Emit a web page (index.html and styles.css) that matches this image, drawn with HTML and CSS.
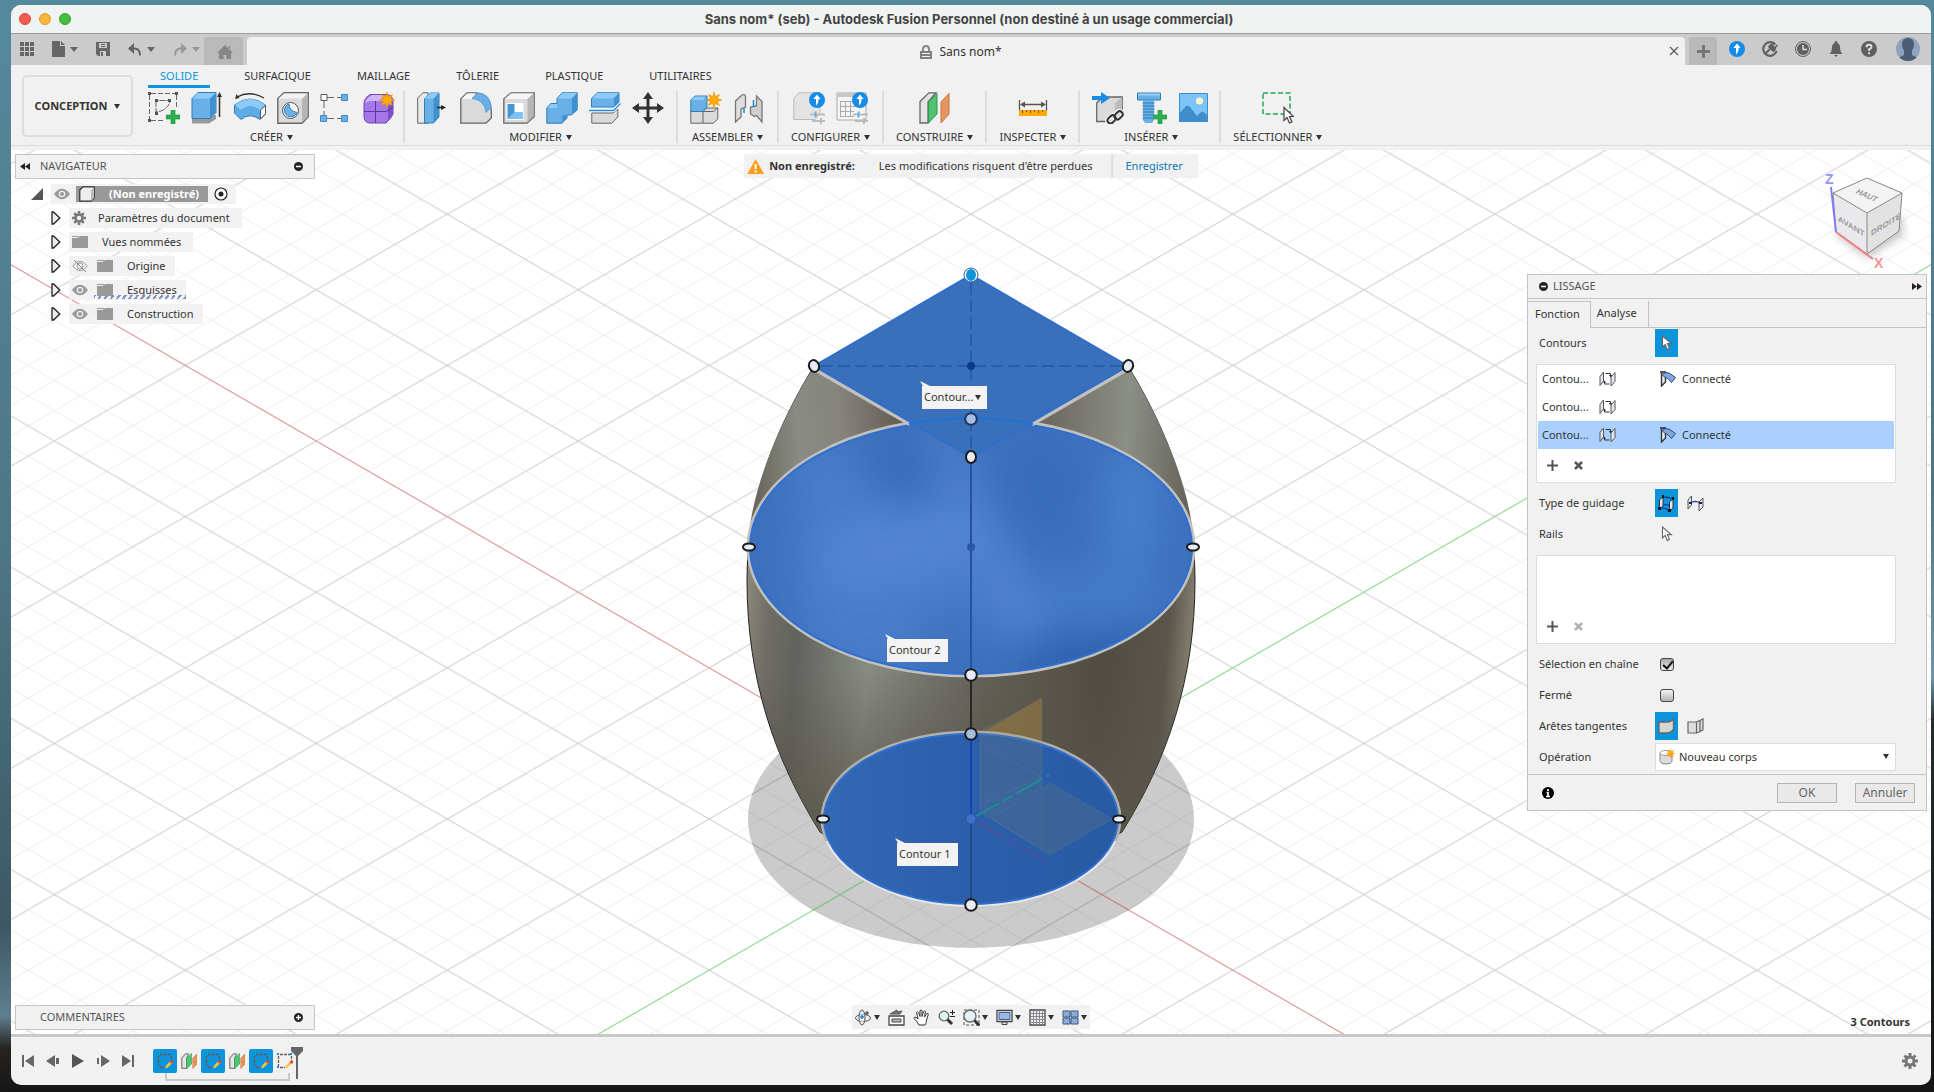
FILE: index.html
```
<!DOCTYPE html>
<html lang="fr">
<head>
<meta charset="utf-8">
<title>Sans nom* (seb) - Autodesk Fusion Personnel</title>
<link rel="stylesheet" href="styles.css">
</head>
<body>
<svg class="sprite" aria-hidden="true">
  <symbol id="eye" viewBox="0 0 16 12"><path d="M0 6Q8-4.500 16 6Q8 16.500 0 6Z" fill="#999"/><circle cx="8" cy="6" r="3.300" fill="#f1f1f1"/><circle cx="8" cy="6" r="2" fill="#999"/></symbol>
  <symbol id="eye-off" viewBox="0 0 16 12"><path d="M.7 6Q8-3.500 15.300 6Q8 15.500.7 6Z" fill="none" stroke="#999"/><circle cx="8" cy="6" r="3" fill="none" stroke="#999"/><path d="M2 0L14 12" stroke="#888"/></symbol>
  <symbol id="folder" viewBox="0 0 16 14"><path d="M0 1h7v1H0zM0 3h6l2-2h8v12H0z" fill="#999"/></symbol>
  <symbol id="gear" viewBox="0 0 16 16"><g fill="none" stroke="#777"><circle cx="8" cy="8" r="4" stroke-width="3"/><path d="M8 0v3M8 13v3M0 8h3M13 8h3M2.500 2.500l2 2M11.500 11.500l2 2M13.500 2.500l-2 2M4.500 11.500l-2 2" stroke-width="3"/></g></symbol>
  <symbol id="expand" viewBox="0 0 10 14"><path d="M1 1h1.500L8.800 7L2.500 13H1z" fill="#eee" stroke="#222" stroke-width="1.300"/></symbol>
  <symbol id="plus-green" viewBox="0 0 14 14"><path d="M5 0h4v5h5v4H9v5H5V9H0V5h5z" fill="#2bb04f" stroke="#189038" stroke-width=".6"/></symbol>
  <symbol id="star" viewBox="0 0 16 16"><path d="M8 0l1.400 4.500L13.500 2.500L11.500 6.600L16 8l-4.500 1.400l2 4.100l-4.100-2L8 16l-1.400-4.500l-4.100 2l2-4.100L0 8l4.500-1.400l-2-4.100l4.100 2z" fill="#ffa90a" stroke="#e08a00" stroke-width=".5"/></symbol>
  <symbol id="up-badge" viewBox="0 0 16 16"><circle cx="8" cy="8" r="8" fill="#178be6"/><path d="M8 2.500l3.600 4.600H9.600q0 4.500-2.600 6.400V7.100H4.400z" fill="#fff"/></symbol>
  <symbol id="swap" viewBox="0 0 17 16"><path d="M1 5.500L4.500 1v9L1 14.500zM12 6l4-4.500v9L12 15z" fill="#e3e7ee" stroke="#555"/><path d="M6.500 2.500h5v2M10.500 13H5.500v-2" fill="none" stroke="#333"/><path d="M9.800 4h3.400l-1.700 2.200zM3.800 11.500h3.400L5.500 9.500z" fill="#333"/></symbol>
  <symbol id="connect" viewBox="0 0 16 16"><path d="M1.500 2v13l4-4V6" fill="#eee" stroke="#333" stroke-width="1.400"/><path d="M0 1h6" stroke="#222" stroke-width="1.500"/><path d="M2 3.500Q5 .5 9 2L15.500 6.500l-4 5Q8 6.500 4.500 6z" fill="#7fa9d8" stroke="#234a78"/></symbol>
  <symbol id="pointer" viewBox="0 0 12 16"><path d="M1.500 1v11l2.700-2.600l2 5l2.200-1l-2-4.800h3.900z" fill="#fff" stroke="#666" stroke-width="1.100"/></symbol>
  <symbol id="sketch-edit" viewBox="0 0 16 16"><path d="M3 1.500h10M1.500 3v10M14.500 3v5M3 14.500h5" stroke="#6b5a52" stroke-width="1.300" fill="none" stroke-dasharray="3 1"/><path d="M13.500 8l2 2l-5 4.800l-2.300.5l.5-2.300z" fill="#ffc24a"/><circle cx="14.600" cy="9" r="1.600" fill="#e43"/></symbol>
  <symbol id="plane" viewBox="0 0 16 16"><path d="M.8 5L4.500.8h3L5.800 5v10.300h-5z" fill="#e4e4e4" stroke="#666"/><path d="M5.500 5.500L10.500.5v10.500l-5 4.800z" fill="#4fc274" stroke="#2b9a50" stroke-width=".6"/><path d="M11.800 5L16 1v10l-4.200 4.500z" fill="#e6965e" stroke="#c47440" stroke-width=".6"/></symbol>
</svg>

<div class="window">
  <header class="titlebar">
    <div class="lights"><i class="light red"></i><i class="light yellow"></i><i class="light green"></i></div>
    <h1>Sans nom* (seb) - Autodesk Fusion Personnel (non destiné à un usage commercial)</h1>
  </header>

  <div class="tabstrip">
    <div class="quick">
      <button class="bare" aria-label="Données"><svg width="14" height="14"><path d="M0 0h4v4H0zM5 0h4v4H5zM10 0h4v4h-4zM0 5h4v4H0zM5 5h4v4H5zM10 5h4v4h-4zM0 10h4v4H0zM5 10h4v4H5zM10 10h4v4h-4z" fill="#666"/></svg></button>
      <button class="bare" aria-label="Fichier"><svg width="13" height="16"><path d="M0 0h8v5h5v11H0zM9 0l4 4H9z" fill="#666"/></svg><i class="caret"></i></button>
      <button class="bare" aria-label="Enregistrer"><svg width="14" height="14"><path d="M0 0h14v14H2l-2-2z" fill="#666"/><path d="M3 1h8v5H3zM4 9h6v5H4z" fill="#cbcbcb"/><path d="M5 2.500h4M5 4.500h4" stroke="#666"/><path d="M5 10h2v4H5z" fill="#666"/></svg></button>
      <button class="bare" aria-label="Annuler"><svg width="14" height="13"><path d="M1 5.500h5.500q5.500 0 5.500 7" fill="none" stroke="#666" stroke-width="2"/><path d="M6 0v11L0 5.500z" fill="#666"/></svg><i class="caret"></i></button>
      <button class="bare faded" aria-label="Rétablir"><svg width="14" height="13"><path d="M13 5.500H7.500Q2 5.500 2 12.500" fill="none" stroke="#666" stroke-width="2"/><path d="M8 0v11l6-5.500z" fill="#666"/></svg><i class="caret"></i></button>
    </div>
    <button class="hometab" aria-label="Accueil"><svg width="16" height="14"><path d="M8 0l8 8h-2v6H9.500v-4h-3v4H2V8H0zM11.500 1H13v3l-1.500-1.500z" fill="#868686"/></svg></button>
    <div class="doctab">
      <span class="docname"><svg width="12" height="14"><path d="M3 6V4a3 3 0 0 1 6 0v2" fill="none" stroke="#888" stroke-width="2"/><path d="M0 6h12v8H0z" fill="#808080"/><path d="M2 8.500h8M2 11.500h8" stroke="#eee"/></svg>Sans nom*</span>
      <button class="bare" aria-label="Fermer l'onglet"><svg width="10" height="10"><path d="M1 1l8 8M9 1l-8 8" stroke="#666" stroke-width="1.500"/></svg></button>
    </div>
    <button class="newtab" aria-label="Nouveau"><svg width="13" height="13"><path d="M6.500 0v13M0 6.500h13" stroke="#777" stroke-width="3"/></svg></button>
    <div class="status">
      <button class="bare" aria-label="Mises à jour"><svg width="16" height="16"><use href="#up-badge"/></svg></button>
      <button class="bare" aria-label="Extensions"><svg width="16" height="16"><path d="M13.200 3.500A6.800 6.800 0 1 0 14.600 10" fill="none" stroke="#606060" stroke-width="2.200"/><path d="M3 13l5-5" stroke="#606060" stroke-width="2"/><path d="M6 6l5 5q3-1 3-4L10 3q-3 0-4 3z" fill="#606060"/><path d="M9.500 4.500l3-3M12.500 7l3-3" stroke="#606060" stroke-width="1.600"/></svg></button>
      <button class="bare" aria-label="État des tâches"><svg width="16" height="16"><circle cx="8" cy="8" r="7.500" fill="none" stroke="#606060"/><circle cx="8" cy="8" r="6" fill="#606060"/><path d="M8 4v4.500h4" stroke="#ddd" stroke-width="1.500" fill="none"/></svg></button>
      <button class="bare" aria-label="Notifications"><svg width="16" height="16"><path d="M8 0q1.500 0 1.500 2Q12 3 12 6q0 5 2.500 7h-13Q4 11 4 6q0-3 2.500-4Q6.500 0 8 0zM6 14h4l-2 2z" fill="#606060"/></svg></button>
      <button class="bare" aria-label="Aide"><svg width="16" height="16"><circle cx="8" cy="8" r="8" fill="#606060"/><path d="M5.500 6.300q0-2.500 2.500-2.500t2.500 2.200Q10.500 7.500 8 8.300V10M8 11.200v2" stroke="#ddd" stroke-width="1.900" fill="none"/></svg></button>
      <button class="bare avatar" aria-label="Profil"><svg width="24" height="24"><defs><clipPath id="av"><circle cx="12" cy="12" r="12"/></clipPath></defs><circle cx="12" cy="12" r="12" fill="#8fa3be"/><path clip-path="url(#av)" d="M12 1q6 0 6 6.500q0 4-2 6V18l6 3v4H2v-4l6-3v-4.500q-2-2-2-6Q6 1 12 1z" fill="#4d5c74"/></svg></button>
    </div>
  </div>

  <div class="ribbon">
    <button class="workspace">CONCEPTION<i class="caret dark"></i></button>
    <div class="ribbon-main">
      <nav class="ribbon-tabs">
        <a href="#" class="current">SOLIDE</a><a href="#">SURFACIQUE</a><a href="#">MAILLAGE</a><a href="#">TÔLERIE</a><a href="#">PLASTIQUE</a><a href="#">UTILITAIRES</a>
      </nav>
      <div class="groups">
        <section class="group first">
          <div class="tools">
            <button class="bare" aria-label="Créer une esquisse"><svg width="32" height="32"><path d="M3 1.500h24M1.500 3v24M3 28.500h14M28.500 3v13" fill="none" stroke="#666" stroke-dasharray="5 2"/><path d="M8 9v11l5-1q8-3 9-10.500H8" fill="none" stroke="#666" stroke-dasharray="6 1"/><path d="M0 0h3v3H0zM27 0h3v3h-3zM0 27h3v3H0zM7 7h3v3H7zM20 7h3v3h-3zM7 20h3v3H7z" fill="#555"/><use href="#plus-green" x="18" y="18" width="14" height="14"/></svg></button>
            <button class="bare" aria-label="Extrusion"><svg width="32" height="32"><path d="M1 27l0 4.500h17L25 27v-4z" fill="#999"/><path d="M1 6.500L7 .5h18v20l-6 6H1z" fill="#68b0e6" stroke="#2f7cb8"/><path d="M1.500 6.500L7 1h17.500l-6 5.500z" fill="#8ccaf8"/><path d="M19 7l5.500-6v20L19 26z" fill="#3f92cf"/><path d="M28.500 25V3" stroke="#333" stroke-width="1.500"/><path d="M28.500 0l2.500 5h-5z" fill="#333"/></svg></button>
            <button class="bare" aria-label="Révolution"><svg width="32" height="32"><path d="M3 5Q16-2 30 6" fill="none" stroke="#333" stroke-width="1.300"/><path d="M1 7l1.500-5l3 4z" fill="#333"/><path d="M.5 13Q16 1 31.500 13v9L26 27.500Q16 20 7 27.500L.5 21z" fill="#5fabe4" stroke="#2f7cb8"/><path d="M1 13Q16 1 31 13l-5 5Q16 10 7 18z" fill="#8ccaf8"/><path d="M26.500 18l5-4.500v8l-5 5.500z" fill="#fff" stroke="#555"/></svg></button>
            <button class="bare" aria-label="Perçage"><svg width="32" height="32"><path d="M.8 6.500L7 .8h24.200v24L25 31.200H.8z" fill="#dadada" stroke="#666" stroke-width="1.400"/><path d="M1.500 6.500L7 1.500h23.500l-6 5z" fill="#f3f3f3"/><path d="M25 7l5.500-5v23L25 30.500z" fill="#b5b5b5"/><circle cx="13.500" cy="18.500" r="8" fill="#f4f4f4" stroke="#555"/><path d="M12 12q0 7 8 8.500a6.500 6.500 0 1 1-8-8.500z" fill="#68b0e6" stroke="#3a7fb5"/></svg></button>
            <button class="bare" aria-label="Réseau"><svg width="32" height="32"><path d="M7 5.500h16M4 9v16M7 26.500h16" stroke="#666" stroke-dasharray="7 3"/><path d="M1 2.500h6v6H1z" fill="#fff" stroke="#555"/><path d="M21.500 2.500h6v6h-6zM21.500 23.500h6v6h-6zM.5 23.500h6v6h-6z" fill="#68b0e6" stroke="#3a8ccb"/></svg></button>
            <button class="bare" aria-label="Créer une forme"><svg width="32" height="32"><path d="M1 11Q1 8 4 5l3-2.500h17q6 1 6 7V22q-2 5-7 9H7q-6 0-6-7z" fill="#a476e8" stroke="#6f43b5"/><path d="M2 11q0-3 3-5l4-3h12l-3 6H7z" fill="#d0b4fa"/><path d="M25 14l5-3v11l-5 6z" fill="#7d4ecb"/><path d="M12.500 9v22M1 19.500h22q5-1 7-5" stroke="#5d379c" fill="none"/><use href="#star" x="16" width="16" height="16"/></svg></button>
          </div>
          <button class="bare label">CRÉER<i class="caret dark"></i></button>
        </section>
        <section class="group">
          <div class="tools">
            <button class="bare" aria-label="Appuyer/Tirer"><svg width="32" height="32"><path d="M.7 6L6 .7h5v30.500H.7z" fill="#e8e8e8" stroke="#666"/><path d="M7.500 7L13 1h9v24l-5.500 6h-9z" fill="#68b0e6" stroke="#2f7cb8"/><path d="M8 6.500L13 1h8.500l-5 5.500z" fill="#8ccaf8"/><path d="M16.500 7L22 1.500v23L16.500 30z" fill="#3f92cf"/><path d="M20 15.500h6" stroke="#222" stroke-width="1.500"/><path d="M29 15.500l-5-2.500v5z" fill="#222"/></svg></button>
            <button class="bare" aria-label="Congé"><svg width="32" height="32"><path d="M.8 7L7 .8h9Q31 4 31.300 20v6L26 31.200H.8z" fill="#dadada" stroke="#666" stroke-width="1.300"/><path d="M1.500 7L7 1.500h8L12 7z" fill="#f5f5f5"/><path d="M12 6.500L18 .7Q30 2 31.300 15L26 20.500Q25 8 12 6.500z" fill="#68b0e6" stroke="#3a8ccb" stroke-width=".7"/></svg></button>
            <button class="bare" aria-label="Coque"><svg width="32" height="32"><path d="M.8 7L8 .8h23.200v24L24 31.200H.8z" fill="#dadada" stroke="#666" stroke-width="1.300"/><path d="M1.500 7L8 1.500h22.500l-6 5.500z" fill="#f5f5f5"/><path d="M24.500 7l6-5.500V24l-6 6.500z" fill="#b5b5b5"/><path d="M3.500 11h17v17h-17z" fill="#fff"/><path d="M4.500 12h7v8h8v7h-15z" fill="#4596d3"/><path d="M11.500 20h8v7h-15z" fill="#7cc0f4"/></svg></button>
            <button class="bare" aria-label="Combiner"><svg width="32" height="32"><path d="M.8 16l4-4.500H11V6.500L16 .8h15.200V18l-6 5H21v3l-5 5.200H.8z" fill="#68b0e6" stroke="#2f7cb8"/><path d="M11.500 6.500L16 1h15l-5.500 5.500zM1.500 16l3.500-4h6v4z" fill="#8ccaf8"/><path d="M26 6.500l5-5V18l-5 4.500zM16.500 23H21v3l-4.500 4.500z" fill="#3f92cf"/></svg></button>
            <button class="bare" aria-label="Scinder le corps"><svg width="32" height="32"><path d="M2.800 21h21l5-4v8l-6 6.200h-20z" fill="#dadada" stroke="#666"/><path d="M2.500 6.500L8 .8h22V10l-5.500 5h-22z" fill="#68b0e6" stroke="#2f7cb8"/><path d="M3 6.500L8 1h21.500l-5 5.500z" fill="#8ccaf8"/><path d="M25 6.500l5-5V10l-5 5z" fill="#3f92cf"/><path d="M0 18.500h24.500l7-7" fill="none" stroke="#fff" stroke-width="3"/><path d="M0 18.500h24.500l7-7" fill="none" stroke="#178be6" stroke-width="1.300"/></svg></button>
            <button class="bare" aria-label="Déplacer"><svg width="32" height="32"><path d="M16 4v24M4 16h24" stroke="#333" stroke-width="3"/><path d="M16 0l5 7H11zM16 32l5-7H11zM0 16l7-5v10zM32 16l-7-5v10z" fill="#333"/></svg></button>
          </div>
          <button class="bare label">MODIFIER<i class="caret dark"></i></button>
        </section>
        <section class="group">
          <div class="tools">
            <button class="bare" aria-label="Nouveau composant"><svg width="32" height="32"><path d="M.8 19h12l4-3h11v11l-4.500 4.200H.8z" fill="#dadada" stroke="#666"/><path d="M13 19v12M1 19.500h22.500l4-3.500" stroke="#666" fill="none"/><path d="M.8 8L5 4h12v11l-4 4.500H.8z" fill="#68b0e6" stroke="#2f7cb8"/><path d="M1.500 8L5 4.500h11L13 8z" fill="#8ccaf8"/><use href="#star" x="16" width="16" height="16"/></svg></button>
            <button class="bare" aria-label="Liaison"><svg width="32" height="32"><path d="M2.500 9L9 3q3.500-1.500 3.500 2v10L8 17v8l-5.500 5z" fill="#dedede" stroke="#777" stroke-width="1.300"/><path d="M29 30V9.500L23.500 4v10l-6 1v7l4 2.500l2-1z" fill="#cfcfcf" stroke="#777" stroke-width="1.300"/><path d="M11 16v5M20.500 8v7" stroke="#178be6" stroke-width="1.500"/></svg></button>
          </div>
          <button class="bare label">ASSEMBLER<i class="caret dark"></i></button>
        </section>
        <section class="group">
          <div class="tools">
            <button class="bare" aria-label="Configurer"><svg width="32" height="32"><path d="M.8 6.500L6 .8h21v20L22 27.500H.8z" fill="#e4e4e4" stroke="#bbb"/><path d="M17 22.500h15M19 29h13" stroke="#bbb" stroke-width="2"/><path d="M22.500 19.500v6" stroke="#68b0e6" stroke-width="2"/><path d="M28 26v6" stroke="#bbb" stroke-width="2"/><use href="#up-badge" x="16" width="16" height="16"/></svg></button>
            <button class="bare" aria-label="Table de configurations"><svg width="32" height="32"><path d="M1 1h29v27H1z" fill="#f5f5f5" stroke="#aaa"/><path d="M1 1h29v4H1z" fill="#c8c8c8"/><path d="M4 9.500h20M4 14.500h20M4 19.500h14M4 24.500h14M4.500 9v16M9.500 9v16M14.500 9v16" stroke="#aaa"/><path d="M17 22.500h15M19 29h13M28 26v6" stroke="#bbb" stroke-width="2"/><path d="M22.500 19.500v6" stroke="#68b0e6" stroke-width="2"/><use href="#up-badge" x="16" width="16" height="16"/></svg></button>
          </div>
          <button class="bare label">CONFIGURER<i class="caret dark"></i></button>
        </section>
        <section class="group">
          <div class="tools">
            <button class="bare" aria-label="Plan de décalage"><svg width="32" height="32"><path d="M1 9.500L10 .8h7L9 10v21H1z" fill="#e4e4e4" stroke="#666" stroke-width="1.300"/><path d="M9.500 10L18 1.500v20.500l-8.500 9z" fill="#4fc274" stroke="#2b9a50"/><path d="M22 10l8-8.500v20.500l-8 9z" fill="#e6965e" stroke="#c47440"/></svg></button>
          </div>
          <button class="bare label">CONSTRUIRE<i class="caret dark"></i></button>
        </section>
        <section class="group">
          <div class="tools">
            <button class="bare" aria-label="Mesurer"><svg width="32" height="32"><path d="M2.500 8v10M29.500 8v10M5 12.500h22" stroke="#555" stroke-width="1.300"/><path d="M3 12.500l5-3v6zM29 12.500l-5-3v6z" fill="#555"/><path d="M2 18h28v6H2z" fill="#ffa90a"/><path d="M5.500 18v3M9.500 18v2M13.500 18v3M17.500 18v2M21.500 18v3M25.500 18v2" stroke="#7a5000"/></svg></button>
          </div>
          <button class="bare label">INSPECTER<i class="caret dark"></i></button>
        </section>
        <section class="group insert">
          <div class="tools">
            <button class="bare" aria-label="Insérer un dérivé"><svg width="32" height="32"><path d="M4.700 11l6-6h19.500v17l-7 7.500H4.700z" fill="#dadada" stroke="#666" stroke-width="1.300"/><path d="M23 11l7-6v17l-7 7z" fill="#bdbdbd"/><path d="M0 4h9V0l9 6l-9 6V8H0z" fill="#178be6"/><g fill="none" stroke="#f1f1f1" stroke-width="5"><rect x="15" y="24" width="9" height="6" rx="3" transform="rotate(-45 20 27)"/><rect x="22" y="20" width="9" height="6" rx="3" transform="rotate(-45 27 23)"/></g><g fill="none" stroke="#333" stroke-width="2"><rect x="15" y="24" width="9" height="6" rx="3" transform="rotate(-45 20 27)"/><rect x="22" y="20" width="9" height="6" rx="3" transform="rotate(-45 27 23)"/></g></svg></button>
            <button class="bare" aria-label="Insérer un composant"><svg width="32" height="32"><path d="M2.500 1h23v7h-23z" fill="#68b0e6" stroke="#2f7cb8"/><path d="M3 1.500h22v2H3z" fill="#9ad0f8"/><path d="M8 8h11v20l-2 3h-7l-2-3z" fill="#68b0e6"/><path d="M7.500 11h12M7.500 14h12M7.500 17h12M7.500 20h12M7.500 23h12M7.500 26h12" stroke="#2f7cb8"/><use href="#plus-green" x="18" y="18" width="14" height="14"/></svg></button>
            <button class="bare" aria-label="Insérer une image"><svg width="32" height="32"><path d="M1 1h29v29H1z" fill="#7cc4f7"/><circle cx="21.500" cy="9" r="3.500" fill="#fff7c8"/><path d="M1 22l7-8q2-1 4 1l7 9l4-4q2-1 4 1l3 3v6H1z" fill="#3f8ecb"/><path d="M1.500 1.500h28v28h-28z" fill="none" stroke="#3f8ecb"/></svg></button>
          </div>
          <button class="bare label">INSÉRER<i class="caret dark"></i></button>
        </section>
        <section class="group last">
          <div class="tools">
            <button class="bare" aria-label="Sélectionner"><svg width="32" height="32"><path d="M1 1h27v21H1z" fill="none" stroke="#22a850" stroke-width="1.500" stroke-dasharray="5 2.500"/><path d="M22 15.500v13l3-3l2.500 5.500l2.500-1l-2.500-5.500h4z" fill="#fff" stroke="#444" stroke-width="1.200"/></svg></button>
          </div>
          <button class="bare label">SÉLECTIONNER<i class="caret dark"></i></button>
        </section>
      </div>
    </div>
  </div>

  <main class="canvas">
    <svg class="scene" viewBox="0 150 1920 885" preserveAspectRatio="xMidYMin slice">
      <defs>
        <pattern id="minor" patternUnits="userSpaceOnUse" x="960" y="819" width="52.380" height="30.240"><path d="M0 0L52.380 30.240M0 30.240L52.380 0" stroke="#000" stroke-opacity=".065"/></pattern>
        <pattern id="major" patternUnits="userSpaceOnUse" x="960" y="819" width="261.900" height="151.200"><path d="M0 0L261.900 151.200M0 151.200L261.900 0" stroke="#000" stroke-opacity=".14"/></pattern>
        <linearGradient id="body" gradientUnits="userSpaceOnUse" x1="736" x2="1184" y1="600" y2="640"><stop offset="0" stop-color="#8a867b"/><stop offset=".05" stop-color="#6f6d66"/><stop offset=".12" stop-color="#62635e"/><stop offset=".28" stop-color="#888b84"/><stop offset=".4" stop-color="#75766f"/><stop offset=".55" stop-color="#625f57"/><stop offset=".8" stop-color="#514c43"/><stop offset=".94" stop-color="#5b564b"/><stop offset="1" stop-color="#8a8474"/></linearGradient>
        <linearGradient id="shade" x1="0" x2="0" y1="0" y2="1"><stop offset=".3" stop-color="#565349" stop-opacity="0"/><stop offset=".75" stop-color="#5a564a" stop-opacity=".75"/></linearGradient>
        <linearGradient id="upL" gradientUnits="userSpaceOnUse" x1="744" x2="890" y1="450" y2="440"><stop offset="0" stop-color="#6b685e"/><stop offset=".3" stop-color="#898c84"/><stop offset=".6" stop-color="#85837e"/><stop offset="1" stop-color="#645d54"/></linearGradient>
        <linearGradient id="upR" gradientUnits="userSpaceOnUse" x1="1020" x2="1180" y1="430" y2="440"><stop offset="0" stop-color="#67625a"/><stop offset=".6" stop-color="#8b8f86"/><stop offset="1" stop-color="#66645b"/></linearGradient>
        <linearGradient id="base" x1="0" x2="1" y1="0" y2="0"><stop offset="0" stop-color="#3368b5"/><stop offset=".5" stop-color="#2c5faa"/><stop offset="1" stop-color="#285aa4"/></linearGradient>
        <filter id="soft" x="-60%" y="-60%" width="220%" height="220%"><feGaussianBlur stdDeviation="20"/></filter>
        <clipPath id="c2"><ellipse cx="960" cy="547" rx="221" ry="127"/></clipPath>
      </defs>
      <ellipse cx="960" cy="819" rx="223" ry="129" fill="#cbcbcb"/>
      <rect x="0" y="150" width="1920" height="900" fill="url(#minor)"/>
      <rect x="0" y="150" width="1920" height="900" fill="url(#major)"/>
      <path d="M-100 207L2020 1431" stroke="#ff4040" stroke-opacity=".5"/>
      <path d="M-100 1431L2020 207" stroke="#30f030" stroke-opacity=".5"/>
      <path d="M803 366C764 430 736 500 736 580C736 680 764 760 809 832Q960 930 1111 832C1156 760 1184 680 1184 580C1184 500 1156 430 1117 366L960 457Z" fill="url(#body)" stroke="#222"/>
      <path d="M737 580C736 680 764 760 809 832Q960 930 1111 832C1156 760 1184 680 1183 580Z" fill="url(#shade)"/>
      <path d="M803 366C764 430 742 490 738 535L960 457Z" fill="url(#upL)"/>
      <path d="M1117 366C1156 430 1178 490 1182 535L960 457Z" fill="url(#upR)"/>
      <path d="M976 730L1031 697V745L1031 850L976 806Z" fill="#a87a2e" fill-opacity=".45"/>
      <ellipse cx="960" cy="819" rx="149" ry="87" fill="url(#base)" stroke="#b4b0a8" stroke-width="3"/>
      <path d="M811 824A149 87 0 0 0 1109 824" fill="none" stroke="#b4b0a8" stroke-width="0"/>
      <path d="M816 841A149 87 0 0 0 1104 841" fill="none" stroke="#e6e6e6" stroke-width="3"/>
      <ellipse cx="960" cy="819" rx="147" ry="85" fill="none" stroke="#2f6fd0" stroke-width="2"/>
      <path d="M969 731L1031 700V850L969 812ZM969 744L1031 777L969 804ZM980 818L1039 783L1101 819L1039 855Z" fill="#8a8a60" fill-opacity=".18" stroke="#5f7f9a" stroke-opacity=".3"/>
      <path d="M962 818L1038 775" stroke="#1e8c94" stroke-width="2" stroke-dasharray="30 5 10 5"/>
      <path d="M966 822L1038 864" stroke="#5b4b9a" stroke-width="1.500" stroke-dasharray="30 5 10 5"/>

      <g clip-path="url(#c2)">
        <path d="M730 410h460v270H730z" fill="#3d70bd"/>
        <g filter="url(#soft)">
          <path d="M780 450L830 430L870 500L960 560L985 640L930 600L880 690L790 640Z" fill="#4a7dca"/>
          <ellipse cx="890" cy="545" rx="90" ry="36" transform="rotate(-14 890 545)" fill="#5384d2"/>
          <path d="M915 430L945 440L985 530L1040 620L1000 650L960 540Z" fill="#5485d3"/>
          <ellipse cx="1120" cy="510" rx="26" ry="70" fill="#4680cc"/>
          <ellipse cx="1080" cy="600" rx="70" ry="30" fill="#447ac6"/>
          <ellipse cx="890" cy="470" rx="40" ry="24" fill="#386cb6"/>
          <ellipse cx="1030" cy="490" rx="40" ry="50" fill="#396db7"/>
          <ellipse cx="1100" cy="665" rx="100" ry="34" fill="#2f61ae"/>
        </g>
      </g>
      <ellipse cx="960" cy="547" rx="223" ry="129" fill="none" stroke="#c3c1bc" stroke-width="3"/>
      <ellipse cx="960" cy="547" rx="221" ry="127" fill="none" stroke="#2f6fd0" stroke-width="2"/>
      <path d="M803 367L900 423M1117 367L1020 423" fill="none" stroke="#c3c1bc" stroke-width="7"/>
      <path d="M803 366L960 275L1117 366L960 457Z" fill="#3970b9" stroke="#2f6fcb" stroke-width="2"/>
      <path d="M898 424Q960 412 1022 424" fill="none" stroke="#1e72d6" stroke-width="2"/>
      <path d="M960 283V450M810 366H1110" stroke="#2258a4" stroke-width="1.500" stroke-dasharray="12 5"/>
      <path d="M960 457V675" stroke="#2453a0" stroke-width="2"/>
      <path d="M960 675V733" stroke="#262624" stroke-width="2"/>
      <path d="M960 733V819" stroke="#163fc0" stroke-width="2"/>
      <path d="M960 819V905" stroke="#1f4889" stroke-width="2"/>
      <circle cx="960" cy="366" r="4" fill="#0b3a86"/><circle cx="960" cy="547" r="4" fill="#2a57a8"/><circle cx="960" cy="819" r="5" fill="#3f6fc8" stroke="#2a57b0"/>
      <g fill="#e6ebf5" stroke="#1c1c1c" stroke-width="2">
        <ellipse cx="803" cy="366" rx="5" ry="6" transform="rotate(-20 803 366)"/><ellipse cx="1117" cy="366" rx="5" ry="6" transform="rotate(20 1117 366)"/>
        <ellipse cx="960" cy="457" rx="5" ry="6"/><circle cx="960" cy="675" r="5.800"/><circle cx="960" cy="905" r="5.800"/>
        <ellipse cx="738" cy="547" rx="6" ry="3.600"/><ellipse cx="1182" cy="547" rx="6" ry="3.600"/>
        <ellipse cx="812" cy="819" rx="6" ry="3.600"/><ellipse cx="1108" cy="819" rx="6" ry="3.600"/>
        <g fill="#a9bddd"><circle cx="960" cy="419" r="5.800" stroke="#1d355c"/><circle cx="960" cy="734" r="5.800"/></g>
      </g>
      <circle cx="960" cy="275" r="7" fill="#fff" stroke="#2a5c9c"/><ellipse cx="960" cy="275" rx="5" ry="6" fill="#0d94da"/>
    </svg>

    <section class="browser">
      <header class="panelbar">
        <button class="bare" aria-label="Réduire"><svg width="10" height="7"><path d="M5 0v7L0 3.500zM10 0v7L5 3.500z" fill="#222"/></svg></button>
        <h2>NAVIGATEUR</h2>
        <button class="bare" aria-label="Masquer"><svg width="9" height="9"><circle cx="4.500" cy="4.500" r="4.500" fill="#222"/><path d="M2 4.500h5" stroke="#fff" stroke-width="1.500"/></svg></button>
      </header>
      <ul class="tree">
        <li class="root"><svg class="fold" width="12" height="12"><path d="M12 0v12H0z" fill="#555"/></svg><div class="node"><svg width="16" height="12"><use href="#eye"/></svg><span class="picked"><svg width="16" height="16"><path d="M.8 4L4 .8h11.200V12L12 15.200H.8z" fill="#eee" stroke="#333" stroke-width="1.200"/><path d="M12 4.500L15 1.500V12l-3 3z" fill="#bbb"/></svg>(Non enregistré)</span><svg width="14" height="14"><circle cx="7" cy="7" r="6" fill="#fff" stroke="#222" stroke-width="1.200"/><circle cx="7" cy="7" r="2.500" fill="#222"/></svg></div></li>
        <li><svg class="fold" width="10" height="14"><use href="#expand"/></svg><div class="node doc"><svg width="14" height="14"><use href="#gear"/></svg>Paramètres du document</div></li>
        <li><svg class="fold" width="10" height="14"><use href="#expand"/></svg><div class="node views"><svg width="16" height="14"><use href="#folder"/></svg>Vues nommées</div></li>
        <li><svg class="fold" width="10" height="14"><use href="#expand"/></svg><div class="node"><svg width="16" height="12"><use href="#eye-off"/></svg><svg width="16" height="14"><use href="#folder"/></svg><span>Origine</span></div></li>
        <li><svg class="fold" width="10" height="14"><use href="#expand"/></svg><div class="node hatched"><svg width="16" height="12"><use href="#eye"/></svg><svg width="16" height="14"><use href="#folder"/></svg><span>Esquisses</span></div></li>
        <li><svg class="fold" width="10" height="14"><use href="#expand"/></svg><div class="node"><svg width="16" height="12"><use href="#eye"/></svg><svg width="16" height="14"><use href="#folder"/></svg><span>Construction</span></div></li>
      </ul>
    </section>

    <div class="notice">
      <svg width="17" height="15"><path d="M8.500 0L17 15H0z" fill="#fa9f1e"/><path d="M8.500 5v5M8.500 11.500v2" stroke="#fff" stroke-width="2"/></svg>
      <strong>Non enregistré:</strong><span class="why">Les modifications risquent d'être perdues</span><a href="#">Enregistrer</a>
    </div>

    <svg class="cube" width="90" height="106" viewBox="1820 168 90 106">
      <defs><filter id="cs"><feGaussianBlur stdDeviation="4"/></filter></defs>
      <path d="M1836 234L1867 258L1904 234L1900 215L1850 215Z" fill="#999" fill-opacity=".6" filter="url(#cs)"/>
      <path d="M1833 193L1867 178L1902 193L1867 213Z" fill="#f3f3f3"/><path d="M1833 193L1867 213V254L1836 232Z" fill="#e9e9eb"/><path d="M1867 213L1902 193L1899 231L1867 254Z" fill="#e2e2e3"/>
      <path d="M1833 193L1867 178L1902 193L1899 231L1867 254L1836 232ZM1833 193L1867 213L1902 193M1867 213V254" fill="none" stroke="#888"/>
      <path d="M1831 187L1836 232" stroke="#7f7ff5" stroke-width="2"/><path d="M1836 232L1873 259" stroke="#ef7f7f" stroke-width="2"/>
      <g class="facetext"><text transform="translate(1855 193) rotate(24) skewX(-18)">HAUT</text><text transform="translate(1838 221) skewY(31)">AVANT</text><text transform="translate(1871 236) skewY(-31)">DROITE</text></g>
      <text class="axis z" x="1825" y="184">Z</text><text class="axis x" x="1874" y="268">X</text>
    </svg>

    <button class="tag tag-top">Contour...<i class="caret dark"></i></button>
    <span class="tag tag-mid">Contour 2</span>
    <span class="tag tag-low">Contour 1</span>

    <form class="dialog">
      <header class="dlg-head"><svg width="9" height="9"><circle cx="4.500" cy="4.500" r="4.500" fill="#222"/><path d="M2 4.500h5" stroke="#fff" stroke-width="1.500"/></svg><h2>LISSAGE</h2><svg width="10" height="7"><path d="M0 0v7l5-3.500zM5 0v7l5-3.500z" fill="#222"/></svg></header>
      <div class="dlg-tabs"><button type="button" class="on">Fonction</button><button type="button">Analyse</button></div>
      <div class="dlg-body">
        <div class="row"><span>Contours</span><button type="button" class="pick on" aria-label="Sélectionner les contours"><svg width="12" height="16"><use href="#pointer"/></svg></button></div>
        <div class="list">
          <ul>
            <li><span>Contou...</span><svg width="17" height="16"><use href="#swap"/></svg><svg width="16" height="16"><use href="#connect"/></svg><span>Connecté</span></li>
            <li><span>Contou...</span><svg width="17" height="16"><use href="#swap"/></svg></li>
            <li class="on"><span>Contou...</span><svg width="17" height="16"><use href="#swap"/></svg><svg width="16" height="16"><use href="#connect"/></svg><span>Connecté</span></li>
          </ul>
          <div class="listtools"><button type="button" class="bare" aria-label="Ajouter un contour"><svg width="11" height="11"><path d="M5.500 0v11M0 5.500h11" stroke="#555" stroke-width="2"/></svg></button><button type="button" class="bare" aria-label="Supprimer le contour"><svg width="9" height="9"><path d="M1 1l7 7M8 1l-7 7" stroke="#555" stroke-width="2.500"/></svg></button></div>
        </div>
        <div class="row"><span>Type de guidage</span><button type="button" class="pick on" aria-label="Rails"><svg width="17" height="17"><path d="M1.500 5L5 2v9l-3.500 3zM11.500 7L15 4v9l-3.500 3z" fill="#e3e7ee" stroke="#333"/><path d="M5 2q6 0 10 2M2 13q5-1 9.500 3M5 10q3-1 7 1" fill="none" stroke="#123c9c" stroke-width="1.300"/><path d="M4 0h2v3H4zM14 2h2v3h-2zM0 12h3v3H0zM10 14h3v3h-3z" fill="#111"/></svg></button><button type="button" class="pick" aria-label="Ligne centrale"><svg width="17" height="17"><path d="M1 5L4.500 1v9L1 14zM12 7l4-4v9l-4 4z" fill="#e3e7ee" stroke="#555"/><path d="M3 8q5-3 11 0" fill="none" stroke="#2050c0" stroke-width="1.300"/><path d="M2 7h3v2H2zM12 7h3v2h-3z" fill="#222"/></svg></button></div>
        <div class="row"><span>Rails</span><button type="button" class="pick" aria-label="Sélectionner les rails"><svg width="12" height="16"><use href="#pointer"/></svg></button></div>
        <div class="list rails">
          <div class="listtools"><button type="button" class="bare" aria-label="Ajouter un rail"><svg width="11" height="11"><path d="M5.500 0v11M0 5.500h11" stroke="#555" stroke-width="2"/></svg></button><button type="button" class="bare faded" aria-label="Supprimer le rail"><svg width="9" height="9"><path d="M1 1l7 7M8 1l-7 7" stroke="#666" stroke-width="2.500"/></svg></button></div>
        </div>
        <div class="row"><label for="chain">Sélection en chaîne</label><input type="checkbox" id="chain" checked></div>
        <div class="row"><label for="closed">Fermé</label><input type="checkbox" id="closed"></div>
        <div class="row"><span>Arêtes tangentes</span><button type="button" class="pick on" aria-label="Fusionner"><svg width="17" height="16"><path d="M1 4h9q4-.5 5.500-3v10Q14 14 10 15H1z" fill="#d5d5d5" stroke="#666" stroke-width="1.300"/></svg></button><button type="button" class="pick" aria-label="Conserver"><svg width="17" height="16"><path d="M1 4h8.500v11H1zM9.500 4L13 2.500v11L9.500 15M13 2.500L16 .8v11l-3 1.700" fill="#ddd" stroke="#666" stroke-width="1.200"/></svg></button></div>
        <div class="row"><label for="op">Opération</label><div class="combo"><svg width="16" height="16"><path d="M1 4.500v8q1 2.500 6 2.500t6-2.500v-8" fill="#ddd" stroke="#888"/><ellipse cx="7" cy="4" rx="6" ry="2.500" fill="#fff" stroke="#999"/><use href="#star" x="7" y="0" width="9" height="9"/></svg><select id="op"><option>Nouveau corps</option></select><i class="caret dark"></i></div></div>
      </div>
      <footer class="dlg-foot"><svg width="12" height="12"><circle cx="6" cy="6" r="6" fill="#000"/><path d="M6 2v2M4.500 5.500H6V9M4 9.500h4" stroke="#fff" stroke-width="1.700" fill="none"/></svg><button type="button">OK</button><button type="button">Annuler</button></footer>
    </form>

    <section class="comments panelbar"><h2>COMMENTAIRES</h2><button class="bare" aria-label="Afficher"><svg width="9" height="9"><circle cx="4.500" cy="4.500" r="4.500" fill="#222"/><path d="M2 4.500h5M4.500 2v5" stroke="#fff" stroke-width="1.300"/></svg></button></section>

    <div class="viewbar">
      <button class="bare" aria-label="Orbite"><svg width="17" height="17"><ellipse cx="8" cy="9" rx="7.500" ry="3.500" fill="none" stroke="#555"/><ellipse cx="7" cy="8.500" rx="3" ry="7.500" fill="#f1f1f1" fill-opacity=".6" stroke="#555"/><path d="M5 8h4M7 6v4" stroke="#178be6" stroke-width="1.500"/><path d="M10 4h4M12 2v4" stroke="#333"/></svg><i class="caret dark"></i></button>
      <button class="bare" aria-label="Vue de face"><svg width="17" height="17"><path d="M1 7h15v9H1z" fill="#fff" stroke="#444" stroke-width="1.300"/><path d="M4 10h9v3H4z" fill="#bbb" stroke="#444"/><path d="M2 5l7-4v2l5-1l-2 3z" fill="#777" stroke="#555"/></svg></button>
      <button class="bare" aria-label="Panoramique"><svg width="17" height="17"><path d="M6 16Q4 12 1 9.500q0-2 2-1.200L5 10L3.500 3.500q1-1.500 2 0L7 7.500V1.500q1-1 2 0v6l1.500-5q1-1 2 0L11.500 8L14 4.500q1.500-.5 1.300 1L13.500 11q0 3-1.500 5z" fill="#fff" stroke="#333"/></svg></button>
      <button class="bare" aria-label="Zoom"><svg width="17" height="17"><circle cx="6" cy="7" r="4.800" fill="#e4f1f4" stroke="#666" stroke-width="1.300"/><path d="M9.500 10.500l4.500 4.500" stroke="#333" stroke-width="3"/><path d="M12 3.500h5M14.500 1v5M12 7.500h5" stroke="#222"/></svg></button>
      <button class="bare" aria-label="Ajuster"><svg width="17" height="17"><path d="M1 1h15v15H1z" fill="none" stroke="#555" stroke-dasharray="3 2"/><circle cx="7" cy="7" r="6" fill="#e4f1f4" stroke="#666" stroke-width="1.300"/><path d="M11.500 11.500l5 5" stroke="#333" stroke-width="3"/></svg><i class="caret dark"></i></button>
      <button class="bare" aria-label="Affichage"><svg width="17" height="17"><path d="M1 1.500h15v11H1z" fill="#fff" stroke="#444" stroke-width="1.300"/><path d="M3 3.500h11v7H3z" fill="#9ab9e3" stroke="#3d5f96"/><path d="M6 13h5v2.500H6z" fill="#ddd" stroke="#444"/></svg><i class="caret dark"></i></button>
      <button class="bare" aria-label="Grille"><svg width="17" height="17"><path d="M1 1h15v15H1z" fill="#eef0f5" stroke="#444" stroke-width="1.300"/><path d="M4.500 1v15M7.500 1v15M10.500 1v15M13.500 1v15M1 4.500h15M1 7.500h15M1 10.500h15M1 13.500h15" stroke="#888"/></svg><i class="caret dark"></i></button>
      <button class="bare" aria-label="Fenêtres"><svg width="17" height="15"><path d="M1 1h7v6H1zM9 1h7v6H9zM1 8h7v6H1zM9 8h7v6H9z" fill="#9ab9e3" stroke="#34507f"/><path d="M3 3h3v2H3zM11 3h3v2h-3zM3 10h3v2H3zM11 10h3v2h-3z" fill="#cfe0f6" stroke="#4a6fa5" stroke-width=".6"/></svg><i class="caret dark"></i></button>
    </div>
    <strong class="selcount">3 Contours</strong>
  </main>

  <footer class="timeline">
    <div class="transport">
      <button class="bare" aria-label="Début"><svg width="12" height="12"><path d="M0 0h2v12H0zM12 0v12L3 6z" fill="#666"/></svg></button>
      <button class="bare" aria-label="Étape précédente"><svg width="14" height="12"><path d="M9 0v12L0 6zM10 3h3v6h-3z" fill="#666"/></svg></button>
      <button class="bare" aria-label="Lecture"><svg width="12" height="14"><path d="M0 0l12 7L0 14z" fill="#555"/></svg></button>
      <button class="bare" aria-label="Étape suivante"><svg width="14" height="12"><path d="M5 0l9 6l-9 6zM1 3h2v6H1z" fill="#666"/></svg></button>
      <button class="bare" aria-label="Fin"><svg width="12" height="12"><path d="M10 0h2v12h-2zM0 0l9 6L0 12z" fill="#666"/></svg></button>
    </div>
    <div class="steps">
      <button class="step on" aria-label="Esquisse 1"><svg width="16" height="16"><use href="#sketch-edit"/></svg></button>
      <button class="step" aria-label="Plan 1"><svg width="16" height="16"><use href="#plane"/></svg></button>
      <button class="step on" aria-label="Esquisse 2"><svg width="16" height="16"><use href="#sketch-edit"/></svg></button>
      <button class="step" aria-label="Plan 2"><svg width="16" height="16"><use href="#plane"/></svg></button>
      <button class="step on" aria-label="Esquisse 3"><svg width="16" height="16"><use href="#sketch-edit"/></svg></button>
      <button class="step" aria-label="Lissage"><svg width="16" height="16"><use href="#sketch-edit"/><path d="M0 0h2v2H0zM13 0h2v2h-2zM0 13h2v2H0z" fill="#178be6"/></svg></button>
      <svg class="marker" width="12" height="32"><path d="M0 0h12v4L7 9v23H5V9L0 4z" fill="#666"/></svg>
    </div>
    <button class="bare settings" aria-label="Préférences"><svg width="16" height="16"><use href="#gear"/></svg></button>
  </footer>
</div>
</body>
</html>
```
FILE: styles.css
```
* { box-sizing: border-box; }
body {
  margin: 0;
  padding: 5px 3px 7px 11px;
  height: 100vh;
  background:
    linear-gradient(#54899c 0%, #4d7686 45%, #6d97a8 62%, #222c30 66%, #161616 100%) right / 3px 100% no-repeat,
    linear-gradient(#54899c 0%, #4d7686 50%, #3d5865 85%, #5f7f8f 93%, #26241f 96%, #161616 100%) left / 11px 100% no-repeat,
    linear-gradient(#54899c 0%, #54899c 50%, #161616 50%);
  font: 11px/14px "Noto Sans", "Open Sans", sans-serif;
  color: #333;
}
h1, h2, ul { margin: 0; padding: 0; font: inherit; list-style: none; }
button, select, input { font: inherit; color: inherit; margin: 0; }
a { color: inherit; text-decoration: none; }
svg { display: block; flex: none; }
.sprite { position: absolute; width: 0; height: 0; }
.bare { display: flex; align-items: center; gap: 5px; padding: 0; border: 0; background: none; }
.faded { opacity: .5; }
.caret { width: 0; height: 0; border: 4px solid transparent; border-top: 5px solid #666; border-bottom: 0; flex: none; }
.caret.dark { border-width: 5px 3px 0; border-top-color: #333; }

.window { height: 100%; display: flex; flex-direction: column; border-radius: 10px; overflow: hidden; background: #f1f1f1; }

.titlebar { display: grid; grid-template-columns: 80px 1fr 84px; align-items: center; height: 29px; flex: none; background: #f0f3f1; border-bottom: 1px solid #9c9c9c; }
.titlebar h1 { text-align: center; font: bold 13px/20px Inter, sans-serif; color: #444; }
.lights { display: flex; gap: 8px; padding-left: 8px; }
.light { width: 12px; height: 12px; border-radius: 50%; }
.red { background: #f25b50; border: 1px solid #d9453b; }
.yellow { background: #f6b73c; border: 1px solid #dd9d2a; }
.green { background: #46bd3d; border: 1px solid #35a22d; }

.tabstrip { display: flex; height: 31px; padding-top: 3px; flex: none; background: #cbcbcb; }
.quick { display: flex; align-items: center; gap: 18px; width: 193px; padding: 0 0 4px 9px; }
.hometab { display: flex; align-items: center; justify-content: center; width: 39px; border: 0; border-radius: 3px 3px 0 0; background: #b9b9b9; padding: 2px 0 0 3px; }
.doctab { flex: 1; display: flex; align-items: center; margin: 0 4px; padding: 0 6px 0 0; border-radius: 4px 4px 0 0; background: #f1f1f1; }
.docname { flex: 1; display: flex; justify-content: center; align-items: center; gap: 7px; padding: 2px 0 0 6px; font-size: 12px; line-height: 18px; }
.newtab { display: flex; align-items: center; justify-content: center; width: 28px; padding: 0; border: 0; border-radius: 3px 3px 0 0; background: #b9b9b9; }
.status { display: flex; align-items: center; gap: 17px; padding: 0 11px 4px 12px; }
.avatar { margin-left: 2px; }

.ribbon { display: flex; gap: 15px; flex: none; height: 85px; padding: 0 11px; border-bottom: 4px solid #f1f1f1; box-shadow: inset 0 -1px #dcdcdc; }
.workspace { display: flex; align-items: center; justify-content: center; gap: 7px; width: 111px; height: 62px; margin-top: 10px; padding: 0; border: 2px solid #ddd; border-radius: 5px; background: #f1f1f1; font-weight: bold; }
.ribbon-main { flex: 1; }
.ribbon-tabs { display: flex; gap: 22px; height: 23px; }
.ribbon-tabs a { padding: 4px 12px 0; }
.ribbon-tabs .current { color: #0b97dc; border-bottom: 3px solid #0b97dc; }
.groups { display: flex; padding-top: 3px; }
.group { display: flex; flex-direction: column; align-items: center; gap: 5px; height: 52px; padding: 1px 12px 0; border-right: 2px solid #ddd; }
.group.first { padding-left: 0; padding-right: 8px; }
.group.insert { padding-right: 9px; }
.group.last { border: 0; }
.tools { display: flex; gap: 11px; }
.label { gap: 4px; line-height: 16px; white-space: nowrap; }

.canvas { position: relative; flex: 1; min-height: 0; overflow: hidden; background: #fff; border-bottom: 3px solid #c9c9c9; }
.scene { position: absolute; inset: 0; width: 100%; height: 100%; }
.browser { position: absolute; left: 4px; top: 4px; width: 300px; }
.panelbar { display: flex; align-items: center; gap: 10px; height: 25px; width: 300px; padding: 0 11px 1px 4px; border: 1px solid #c6c6c6; background: #f1f1f1; color: #555; }
.panelbar h2 { flex: 1; }
.comments { position: absolute; left: 4px; bottom: 4px; padding-left: 24px; }
.tree { padding-top: 3px; }
.tree li { display: flex; align-items: center; gap: 8px; height: 24px; padding-left: 36px; }
.tree .root { padding-left: 16px; gap: 8px; }
.node { display: flex; align-items: center; gap: 9px; height: 20px; padding: 0 9px 0 3px; background: rgba(241,241,241,.9); }
.node span { padding-left: 5px; }
.node.doc { gap: 12px; padding-right: 12px; }
.node.views { gap: 14px; padding-right: 12px; }
.root .node { gap: 6px; padding-right: 8px; }
.node .picked { display: flex; align-items: center; gap: 14px; height: 16px; padding: 0 9px 0 3px; background: #999; color: #fff; font-weight: bold; }
.hatched { position: relative; }
.hatched::after { content: ""; position: absolute; left: 25px; right: 0; bottom: 1px; height: 4px; background: repeating-linear-gradient(125deg, #7d93bd 0 2px, transparent 2px 5px); }

.notice { position: absolute; left: 50%; top: 4px; transform: translateX(-50%); display: flex; align-items: center; gap: 5px; height: 24px; padding-left: 3px; background: #f1f1f1; white-space: nowrap; }
.notice .why { padding: 0 19px 0 19px; }
.notice a { border-left: 2px solid #ddd; padding: 5px 15px 5px 12px; margin-left: -5px; color: #0a74b5; }
.cube { position: absolute; right: 21px; top: 18px; }
.facetext { font: bold 8px "Liberation Sans", sans-serif; fill: #999; }
.axis { font: bold 14px "Liberation Sans", sans-serif; fill: #9494f5; }
.axis.x { fill: #f59494; }

.tag { position: absolute; display: flex; align-items: center; gap: 2px; height: 23px; padding: 0 6px 1px 2px; border: 0; background: #f3f3f3; white-space: nowrap; }
.tag::before { content: ""; position: absolute; left: -2px; top: -5px; width: 12px; height: 6px; background: #f3f3f3; clip-path: polygon(0 0, 100% 100%, 30% 100%); }
.tag-top { left: calc(50% - 49px); top: 236px; }
.tag-mid { left: calc(50% - 84px); top: 489px; padding-right: 7px; }
.tag-low { left: calc(50% - 74px); top: 693px; padding-right: 7px; }

.dialog { position: absolute; right: 4px; top: 124px; width: 400px; border: 1px solid #c3c3c3; background: #f1f1f1; }
.dlg-head { display: flex; align-items: center; gap: 5px; height: 24px; padding: 0 4px 1px 11px; border-bottom: 1px solid #c6c6c6; color: #555; }
.dlg-head h2 { flex: 1; }
.dlg-tabs { display: flex; align-items: stretch; height: 29px; padding-top: 2px; }
.dlg-tabs::after { content: ""; flex: 1; border-bottom: 1px solid #c3c3c3; }
.dlg-tabs button { padding: 0 11px 2px 6px; border: 0; border-right: 1px solid #c3c3c3; border-bottom: 1px solid #c3c3c3; background: #f1f1f1; }
.dlg-tabs .on { padding: 0 10px 2px 7px; border-top: 1px solid #c3c3c3; border-bottom: 0; }
.dlg-body { display: flex; flex-direction: column; gap: 3px; padding: 1px 30px 3px 8px; }
.row { display: flex; align-items: center; height: 28px; padding-left: 3px; }
.row > :first-child { width: 116px; flex: none; }
.pick { display: flex; align-items: center; justify-content: center; width: 23px; height: 28px; margin-right: 6px; padding: 0; border: 0; background: none; }
.pick.on { background: #0b94d9; }
.row input { appearance: none; position: relative; width: 14px; height: 13px; margin-left: 5px; border: 1px solid #444; border-radius: 3px; background: linear-gradient(#f4f4f4, #b4b4b4); }
.row input:checked { background: linear-gradient(#a8a8a8, #eee); }
.row input:checked::after { content: ""; position: absolute; left: 4px; top: 0; width: 4px; height: 8px; border: solid #111; border-width: 0 2px 2px 0; transform: rotate(40deg); }
.list { margin: 4px 0 3px; padding: 0 1px 1px; border: 1px solid #ddd; background: #fff; }
.list li { display: grid; grid-template-columns: 57px 61px 22px 1fr; align-items: center; height: 28px; padding-left: 4px; }
.list li.on { background: #a9d0ff; }
.listtools { display: flex; align-items: center; gap: 16px; height: 32px; padding-left: 9px; }
.rails { height: 89px; display: flex; align-items: flex-end; }
.combo { position: relative; flex: 1; height: 28px; }
.combo svg { position: absolute; left: 4px; top: 6px; }
.combo .caret { position: absolute; right: 7px; top: 11px; }
.combo select { appearance: none; width: 100%; height: 28px; padding: 0 20px 0 23px; border: 1px solid #ddd; border-radius: 0; background: #fff; }
.dlg-foot { display: flex; align-items: center; gap: 18px; height: 36px; padding: 0 11px 0 14px; border-top: 1px solid #c3c3c3; }
.dlg-foot svg { margin-right: auto; }
.dlg-foot button { width: 60px; height: 20px; padding: 0; border: 1px solid #b5b5b5; background: #e9e9e9; font-size: 12px; color: #666; }

.viewbar { position: absolute; left: 50%; bottom: 5px; transform: translateX(-50%); display: flex; align-items: center; gap: 8px; height: 24px; padding: 0 3px; background: #f1f1f1; }
.viewbar .bare { gap: 2px; }
.selcount { position: absolute; right: 21px; bottom: 5px; }

.timeline { display: flex; align-items: center; height: 48px; flex: none; padding: 0 13px 0 11px; }
.transport { display: flex; align-items: center; gap: 12px; width: 131px; }
.steps { position: relative; display: flex; flex: 1; }
.steps::after { content: ""; position: absolute; left: 12px; top: 24px; width: 121px; height: 6px; border: solid #c9c9c9; border-width: 0 2px 2px; }
.step { display: flex; align-items: center; justify-content: center; width: 24px; height: 24px; padding: 0; border: 0; border-radius: 2px; background: none; }
.step.on { background: #0b94d9; }
.marker { position: absolute; left: 138px; top: -2px; }
```
